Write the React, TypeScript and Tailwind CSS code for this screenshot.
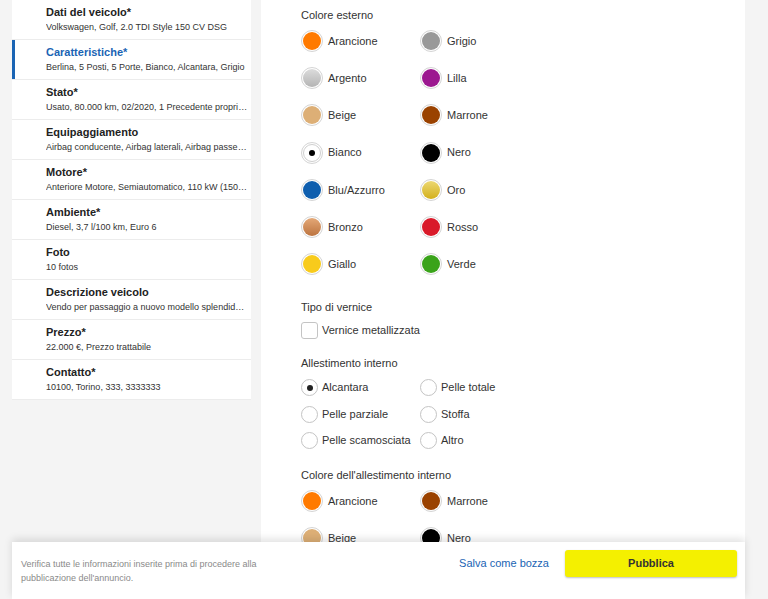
import React from "react";

type NavItem = { title: string; sub: string; active?: boolean };

const navItems: NavItem[] = [
  { title: "Dati del veicolo*", sub: "Volkswagen, Golf, 2.0 TDI Style 150 CV DSG" },
  { title: "Caratteristiche*", sub: "Berlina, 5 Posti, 5 Porte, Bianco, Alcantara, Grigio", active: true },
  { title: "Stato*", sub: "Usato, 80.000 km, 02/2020, 1 Precedente proprietario" },
  { title: "Equipaggiamento", sub: "Airbag conducente, Airbag laterali, Airbag passeggero" },
  { title: "Motore*", sub: "Anteriore Motore, Semiautomatico, 110 kW (150 CV)" },
  { title: "Ambiente*", sub: "Diesel, 3,7 l/100 km, Euro 6" },
  { title: "Foto", sub: "10 fotos" },
  { title: "Descrizione veicolo", sub: "Vendo per passaggio a nuovo modello splendida Golf" },
  { title: "Prezzo*", sub: "22.000 €, Prezzo trattabile" },
  { title: "Contatto*", sub: "10100, Torino, 333, 3333333" },
];

type Swatch = { name: string; bg: string; selected?: boolean };

const exterior: Swatch[] = [
  { name: "Arancione", bg: "#ff7a00" },
  { name: "Grigio", bg: "#999999" },
  { name: "Argento", bg: "linear-gradient(180deg,#dcdcdc,#b4b4b4)" },
  { name: "Lilla", bg: "#9c1890" },
  { name: "Beige", bg: "#ddaf76" },
  { name: "Marrone", bg: "#9a4200" },
  { name: "Bianco", bg: "#ffffff", selected: true },
  { name: "Nero", bg: "#000000" },
  { name: "Blu/Azzurro", bg: "#0e5eae" },
  { name: "Oro", bg: "linear-gradient(180deg,#ecd873,#d3b01c)" },
  { name: "Bronzo", bg: "linear-gradient(180deg,#e4a877,#bc7440)" },
  { name: "Rosso", bg: "#d91a2a" },
  { name: "Giallo", bg: "#f8cb1c" },
  { name: "Verde", bg: "#3aa31a" },
];

const interior: Swatch[] = [
  { name: "Arancione", bg: "#ff7a00" },
  { name: "Marrone", bg: "#9a4200" },
  { name: "Beige", bg: "#ddaf76" },
  { name: "Nero", bg: "#000000" },
];

const upholstery = [
  { name: "Alcantara", checked: true },
  { name: "Pelle totale" },
  { name: "Pelle parziale" },
  { name: "Stoffa" },
  { name: "Pelle scamosciata" },
  { name: "Altro" },
];

function ColorOption({ s }: { s: Swatch }) {
  return (
    <div className="flex items-center h-[22px]">
      <span className="w-[22px] h-[22px] rounded-full border border-[#d4d4d4] bg-white flex items-center justify-center shrink-0">
        <span
          className="w-[18px] h-[18px] rounded-full flex items-center justify-center"
          style={{ background: s.bg, border: s.bg === "#ffffff" ? "1px solid #cfcfcf" : undefined }}
        >
          {s.selected && <span className="w-[6px] h-[6px] rounded-full bg-black" />}
        </span>
      </span>
      <span className="ml-[5px] text-[11px] text-[#333]">{s.name}</span>
    </div>
  );
}

function Radio({ name, checked }: { name: string; checked?: boolean }) {
  return (
    <div className="flex items-center h-[17px]">
      <span className="w-[17px] h-[17px] rounded-full border border-[#c4c4c4] bg-white flex items-center justify-center shrink-0">
        {checked && <span className="w-[6px] h-[6px] rounded-full bg-[#222]" />}
      </span>
      <span className="ml-[4px] text-[11px] text-[#333] whitespace-nowrap">{name}</span>
    </div>
  );
}

export default function App() {
  return (
    <div
      className="relative w-[768px] h-[599px] overflow-hidden bg-[#f4f4f4] flex"
      style={{ fontFamily: '"Liberation Sans", Arial, sans-serif' }}
    >
      <aside className="ml-[12px] w-[239px] shrink-0 self-start bg-white">
        {navItems.map((item) => (
          <div
            key={item.title}
            className="relative h-10 border-b border-[#ececec] pl-[34px] pr-[2px] flex flex-col justify-center"
          >
            {item.active && <span className="absolute left-0 top-0 bottom-0 w-[3px] bg-[#1a64b4]" />}
            <div
              className={
                "text-[11px] font-bold leading-[14px] " + (item.active ? "text-[#1a64b4]" : "text-[#222]")
              }
            >
              {item.title}
            </div>
            <div className="mt-[2px] text-[9px] leading-[13px] text-[#333] truncate">{item.sub}</div>
          </div>
        ))}
      </aside>

      <main className="ml-[10px] w-[484px] shrink-0 bg-white pl-[40px] pt-[7px]">
        <div className="text-[11px] leading-[16px] text-[#333]">Colore esterno</div>
        <div className="mt-[7px] grid grid-cols-[119px_119px] gap-y-[15.2px]">
          {exterior.map((s) => (
            <ColorOption key={s.name} s={s} />
          ))}
        </div>

        <div className="mt-[24px] text-[11px] leading-[16px] text-[#333]">Tipo di vernice</div>
        <div className="mt-[7px] flex items-center h-[17px]">
          <span className="w-[17px] h-[17px] rounded-[3px] border border-[#c4c4c4] bg-white" />
          <span className="ml-[4px] text-[11px] text-[#333]">Vernice metallizzata</span>
        </div>

        <div className="mt-[16px] text-[11px] leading-[16px] text-[#333]">Allestimento interno</div>
        <div className="mt-[8px] grid grid-cols-[119px_119px] gap-y-[9.5px]">
          {upholstery.map((u) => (
            <Radio key={u.name} name={u.name} checked={u.checked} />
          ))}
        </div>

        <div className="mt-[18px] text-[11px] leading-[16px] text-[#333]">Colore dell'allestimento interno</div>
        <div className="mt-[7px] grid grid-cols-[119px_119px] gap-y-[15.2px]">
          {interior.map((s) => (
            <ColorOption key={s.name} s={s} />
          ))}
        </div>
      </main>

      <div className="absolute left-[12px] bottom-0 w-[733px] h-[57px] bg-white shadow-[0_-3px_8px_rgba(0,0,0,0.12)] flex items-start pt-[8px] pl-[9px] pr-[8px]">
        <div className="mt-[7px] w-[262px] text-[9px] leading-[14px] text-[#8a8a8a]">
          Verifica tutte le informazioni inserite prima di procedere alla pubblicazione dell'annuncio.
        </div>
        <div className="ml-auto flex items-center">
          <button className="text-[11px] text-[#1a64b4] mr-[16px]">Salva come bozza</button>
          <button className="w-[172px] h-[27px] rounded-[3px] bg-[#f4f000] shadow-[0_1px_2px_rgba(0,0,0,0.25)] text-[11px] font-bold text-[#333]">
            Pubblica
          </button>
        </div>
      </div>
    </div>
  );
}
